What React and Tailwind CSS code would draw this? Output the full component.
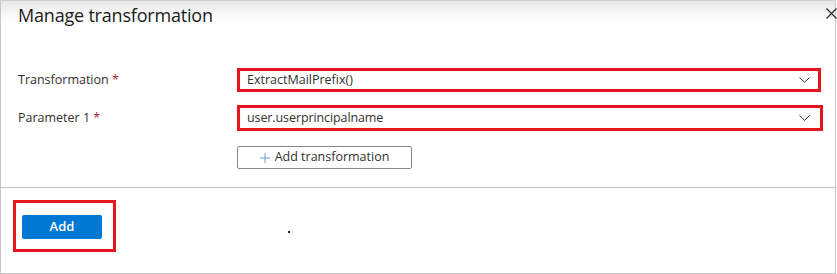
export default function App() {
  const font = { fontFamily: '"Segoe UI", "Open Sans", "Noto Sans", sans-serif' };
  return (
    <div className="w-[837px] h-[274px] bg-white" style={font}>
      <div className="relative w-[836px] h-[274px] border-t border-l border-r border-b border-t-[#d0d0d0] border-[#c6c6c6] flex flex-col">
        <div className="h-[40px] bg-gradient-to-b from-[#e9e9e9] via-white to-white">
          <div className="pl-[17px] pt-[2px] text-[18px] leading-[24px] text-[#1b1b1b] tracking-[-0.2px]">Manage transformation</div>
        </div>
        <div className="flex items-center h-[24px] mt-[27px]">
          <div className="w-[236px] pl-[17px] text-[12.5px] text-[#323130]">
            Transformation <span className="text-[#a4262c]">*</span>
          </div>
          <div className="w-[584px] h-[24px] border-[3px] border-[#e8141e] flex items-center justify-between pl-[7px] pr-[8px] text-[12.5px] text-[#323130]">
            <span>ExtractMailPrefix()</span>
            <svg width="11" height="6" viewBox="0 0 11 6" fill="none" stroke="#323130" strokeWidth="1">
              <path d="M0.5 0.5 L5.5 5.3 L10.5 0.5" />
            </svg>
          </div>
        </div>
        <div className="flex items-center h-[26px] mt-[13px]">
          <div className="w-[236px] pl-[17px] text-[12.5px] text-[#323130]">
            Parameter 1 <span className="text-[#a4262c]">*</span>
          </div>
          <div className="w-[586px] h-[26px] border-[3px] border-[#e8141e] flex items-center justify-between pl-[7px] pr-[10px] text-[12.5px] tracking-[-0.1px] text-[#323130]">
            <span>user.userprincipalname</span>
            <svg width="11" height="6" viewBox="0 0 11 6" fill="none" stroke="#323130" strokeWidth="1">
              <path d="M0.5 0.5 L5.5 5.3 L10.5 0.5" />
            </svg>
          </div>
        </div>
        <div className="pl-[236px] mt-[15px]">
          <div className="w-[175px] h-[23px] border border-[#8a8886] rounded-[2px] flex items-center justify-center gap-[5px] text-[12.5px] text-[#323130]">
            <svg width="10" height="10" viewBox="0 0 10 10" fill="none" stroke="#5aa3dc" strokeWidth="1">
              <path d="M5 0 V10 M0 5 H10" />
            </svg>
            <span>Add transformation</span>
          </div>
        </div>
        <div className="mt-[18px] border-t border-[#c6c6c6]" />
        <div className="flex items-start mt-[12px]">
          <div className="ml-[12px] border-[3px] border-[#e8141e] pl-[6px] pr-[11px] pt-[12px] pb-[10px]">
            <div className="w-[80px] h-[24px] bg-[#0078d4] rounded-[2px] flex items-center justify-center text-white text-[13px] font-semibold">
              Add
            </div>
          </div>
          <div className="ml-[172px] mt-[31px] w-[2px] h-[2px] bg-[#222]" />
        </div>
        <div className="absolute right-[0px] top-[7px] -mr-[2px]">
          <svg width="11" height="11" viewBox="0 0 11 11" fill="none" stroke="#222" strokeWidth="1.1">
            <path d="M0.5 0.5 L10.5 10.5 M10.5 0.5 L0.5 10.5" />
          </svg>
        </div>
      </div>
    </div>
  );
}
